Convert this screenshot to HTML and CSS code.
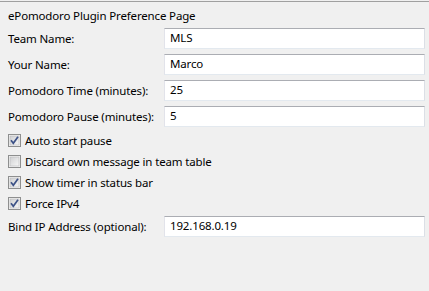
FILE: index.html
```html
<!DOCTYPE html>
<html>
<head>
<meta charset="utf-8">
<link rel="stylesheet" href="styles.css">
</head>
<body>
<div class="page">
  <div class="title">ePomodoro Plugin Preference Page</div>
  <div class="form">
    <div class="field"><label class="label">Team Name:</label><div class="input">MLS</div></div>
    <div class="field"><label class="label">Your Name:</label><div class="input">Marco</div></div>
    <div class="field"><label class="label">Pomodoro Time (minutes):</label><div class="input">25</div></div>
    <div class="field"><label class="label">Pomodoro Pause (minutes):</label><div class="input">5</div></div>
    <div class="checks">
      <div class="check">
        <svg class="box" width="13" height="13" viewBox="0 0 13 13"><defs><linearGradient id="g1" x1="0" y1="0" x2="1" y2="1"><stop offset="0" stop-color="#cfd0d2"/><stop offset="1" stop-color="#f7f7f7"/></linearGradient></defs><rect x="0.5" y="0.5" width="12" height="12" fill="#f4f4f4" stroke="#8e8f8f"/><rect x="2" y="2" width="9" height="9" fill="url(#g1)" stroke="#b8b9bb" stroke-width="0.6"/><path d="M3 6.3 L5.3 9.3 L10 2.7" fill="none" stroke="#3d5287" stroke-width="1.7"/></svg>
        <span>Auto start pause</span>
      </div>
      <div class="check">
        <svg class="box" width="13" height="13" viewBox="0 0 13 13"><defs><linearGradient id="g2" x1="0" y1="0" x2="1" y2="1"><stop offset="0" stop-color="#cfd0d2"/><stop offset="1" stop-color="#f7f7f7"/></linearGradient></defs><rect x="0.5" y="0.5" width="12" height="12" fill="#f4f4f4" stroke="#8e8f8f"/><rect x="2" y="2" width="9" height="9" fill="url(#g2)" stroke="#b8b9bb" stroke-width="0.6"/></svg>
        <span>Discard own message in team table</span>
      </div>
      <div class="check">
        <svg class="box" width="13" height="13" viewBox="0 0 13 13"><defs><linearGradient id="g3" x1="0" y1="0" x2="1" y2="1"><stop offset="0" stop-color="#cfd0d2"/><stop offset="1" stop-color="#f7f7f7"/></linearGradient></defs><rect x="0.5" y="0.5" width="12" height="12" fill="#f4f4f4" stroke="#8e8f8f"/><rect x="2" y="2" width="9" height="9" fill="url(#g3)" stroke="#b8b9bb" stroke-width="0.6"/><path d="M3 6.3 L5.3 9.3 L10 2.7" fill="none" stroke="#3d5287" stroke-width="1.7"/></svg>
        <span>Show timer in status bar</span>
      </div>
      <div class="check">
        <svg class="box" width="13" height="13" viewBox="0 0 13 13"><defs><linearGradient id="g4" x1="0" y1="0" x2="1" y2="1"><stop offset="0" stop-color="#cfd0d2"/><stop offset="1" stop-color="#f7f7f7"/></linearGradient></defs><rect x="0.5" y="0.5" width="12" height="12" fill="#f4f4f4" stroke="#8e8f8f"/><rect x="2" y="2" width="9" height="9" fill="url(#g4)" stroke="#b8b9bb" stroke-width="0.6"/><path d="M3 6.3 L5.3 9.3 L10 2.7" fill="none" stroke="#3d5287" stroke-width="1.7"/></svg>
        <span>Force IPv4</span>
      </div>
    </div>
    <div class="field"><label class="label">Bind IP Address (optional):</label><div class="input">192.168.0.19</div></div>
  </div>
</div>
</body>
</html>
```
FILE: styles.css
```css
html, body {
  margin: 0;
  padding: 0;
  background: #f0f0f0;
}
body {
  font-family: "Noto Sans", "Open Sans", sans-serif;
  font-size: 11.5px;
  letter-spacing: -0.15px;
  color: #000;
  height: 291px;
  overflow: hidden;
  white-space: nowrap;
}
.page {
  margin-top: 1px;
  border-top: 1px solid #a0a0a0;
  padding: 0 4px 0 8px;
}
.title {
  height: 20px;
  line-height: 20px;
  padding-top: 4px;
  margin-bottom: 2px;
}
.form {
  display: flex;
  flex-direction: column;
  gap: 5px;
}
.field {
  display: grid;
  grid-template-columns: 156px 1fr;
  align-items: center;
  height: 21px;
}
.label {
  line-height: 16px;
}
.input {
  box-sizing: border-box;
  height: 21px;
  line-height: 18px;
  padding: 0 5px;
  background: #fff;
  border: 1px solid #e3e9ef;
  border-top-color: #abadb3;
  border-left-color: #e2e3ea;
  border-right-color: #dbdfe6;
}
.checks {
  display: flex;
  flex-direction: column;
  margin-top: -2px;
  margin-bottom: -3px;
}
.check {
  display: flex;
  align-items: center;
  gap: 4px;
  height: 21px;
}
.box {
  flex: none;
  display: block;
}
```
